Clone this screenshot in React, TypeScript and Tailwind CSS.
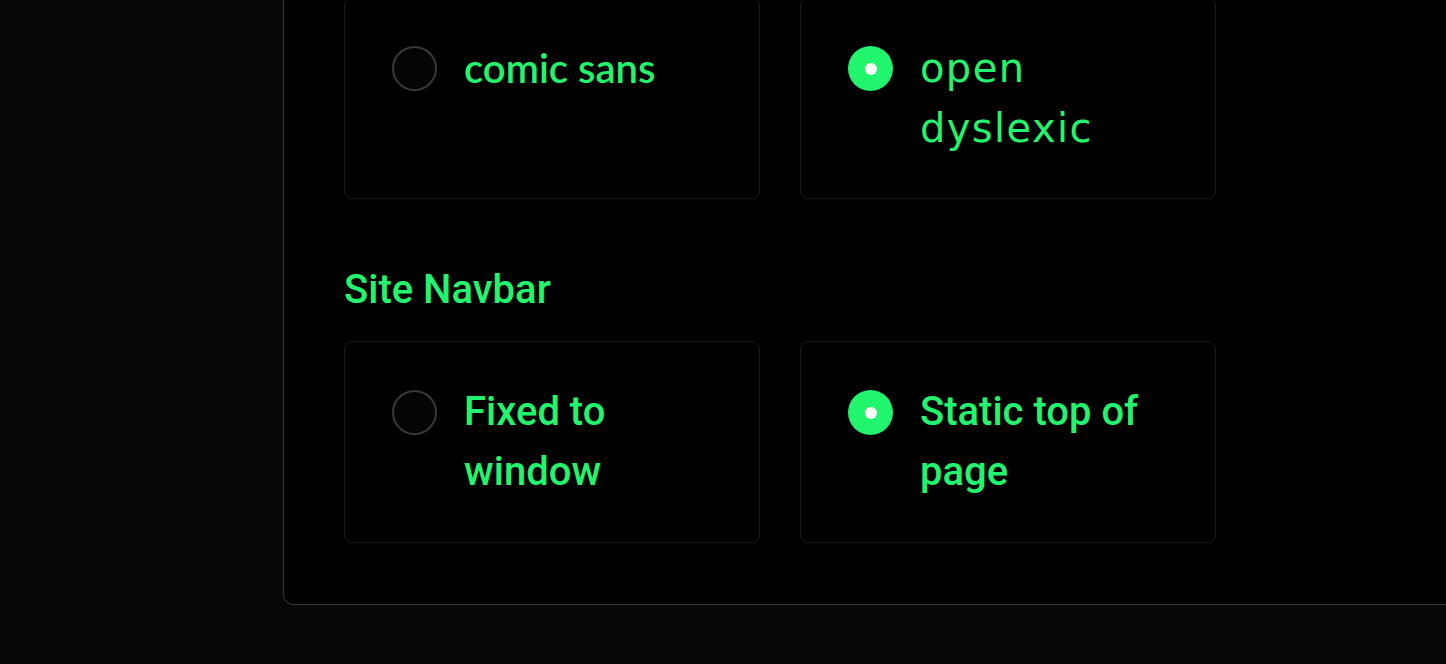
import React, { useState } from "react";

interface Option {
  id: string;
  label: string;
  font: string;
}

const fontOptions: Option[] = [
  { id: "comic", label: "comic sans", font: "font-['Lato',sans-serif] font-semibold" },
  { id: "dyslexic", label: "open dyslexic", font: "font-['DejaVu_Sans',sans-serif] tracking-[1.4px]" },
];

const navOptions: Option[] = [
  { id: "fixed", label: "Fixed to window", font: "font-medium" },
  { id: "static", label: "Static top of page", font: "font-medium" },
];

const RadioCard: React.FC<{
  option: Option;
  checked: boolean;
  onSelect: () => void;
}> = ({ option, checked, onSelect }) => (
  <button
    type="button"
    onClick={onSelect}
    className="flex items-start gap-[27px] rounded-lg border border-[#1a1a1a] bg-black px-[47px] py-10 text-left"
  >
    <span
      className={`mt-2 flex h-[45px] w-[45px] shrink-0 items-center justify-center rounded-full ${
        checked ? "bg-[#22f56d]" : "border-2 border-[#383838] bg-[#050505]"
      }`}
    >
      {checked && <span className="h-3 w-3 rounded-full bg-white" />}
    </span>
    <span className={`text-[40px] leading-[60px] text-[#22f56d] ${option.font}`}>
      {option.label}
    </span>
  </button>
);

export default function App() {
  const [font, setFont] = useState("dyslexic");
  const [nav, setNav] = useState("static");

  return (
    <div className="h-[664px] w-[1446px] overflow-hidden bg-[#070707] font-['Roboto',sans-serif]">
      <div className="-mt-[64px] ml-[283px] w-[1300px] rounded-[10px] border border-[#3a3a3a] bg-black px-[60px] pb-[61px] pt-[60px]">
        <div className="grid w-[872px] grid-cols-2 gap-10">
          {fontOptions.map((o) => (
            <RadioCard key={o.id} option={o} checked={font === o.id} onSelect={() => setFont(o.id)} />
          ))}
        </div>

        <h2 className="mb-[21px] mt-[61px] text-[40px] font-medium leading-[60px] text-[#22f56d]">
          Site Navbar
        </h2>

        <div className="grid w-[872px] grid-cols-2 gap-10">
          {navOptions.map((o) => (
            <RadioCard key={o.id} option={o} checked={nav === o.id} onSelect={() => setNav(o.id)} />
          ))}
        </div>
      </div>
    </div>
  );
}
